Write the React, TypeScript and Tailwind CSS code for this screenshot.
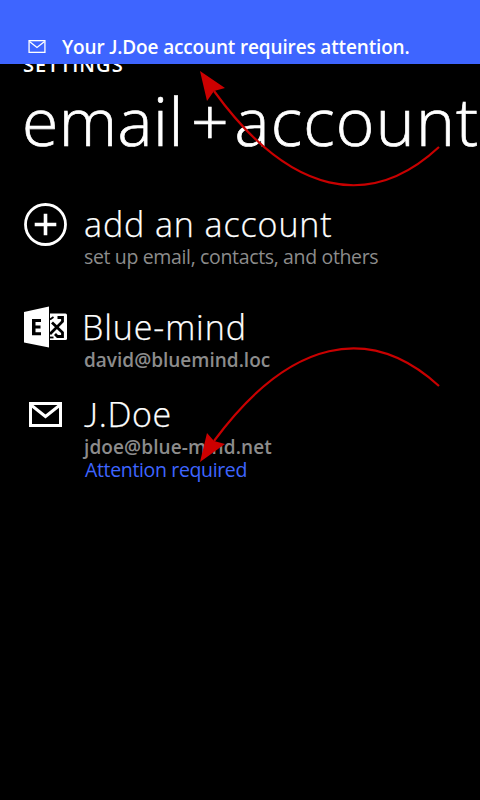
import type { ReactNode } from "react";

function Envelope({ className, stroke }: { className: string; stroke: number }) {
  return (
    <svg className={className} viewBox="0 0 33 25" fill="none" stroke="white" strokeWidth={stroke}>
      <rect x={stroke / 2} y={stroke / 2} width={33 - stroke} height={25 - stroke} />
      <path d="M2 3 L16.5 14.5 L31 3" />
    </svg>
  );
}

function AddIcon() {
  return (
    <svg className="h-[44px] w-[44px]" viewBox="0 0 44 44" fill="none" stroke="white">
      <circle cx="22.5" cy="22.5" r="20" strokeWidth="2.8" />
      <path d="M22.5 11.7V33.3M11.7 22.5H33.3" strokeWidth="3.6" />
    </svg>
  );
}

function ExchangeIcon() {
  return (
    <svg className="mt-px ml-px h-[42px] w-[44px]" viewBox="0 0 44 42">
      <path d="M0 6 L25 0.5 V41.5 L0 36.5 Z" fill="white" />
      <path d="M8 13H17V16H11.5V19.5H16.5V22.5H11.5V26.3H17V29.3H8Z" fill="black" />
      <path d="M26 7.5H41.5Q43 7.5 43 9V32.5Q43 34 41.5 34H26Z" fill="white" />
      <g fill="none" stroke="black" strokeWidth="2.4">
        <path d="M26 28 L38.5 15.5 V11.5 H33.5" strokeWidth="2.8" />
        <path d="M28 16.5 L38.5 26.5 V30.5 H33.5 L31 28" strokeWidth="2.8" />
        <path d="M26 13.5 L29.5 11" strokeWidth="1.8" />
        <path d="M26 31.5 L29.5 31.5" strokeWidth="1.8" />
      </g>
    </svg>
  );
}

function Row({ icon, children, className }: { icon: ReactNode; children: ReactNode; className: string }) {
  return (
    <div className={`flex ${className}`}>
      <div className="w-[61px] shrink-0">{icon}</div>
      <div className="mt-px flex flex-col whitespace-nowrap">{children}</div>
    </div>
  );
}

export default function App() {
  return (
    <div className="relative h-[800px] w-[480px] overflow-hidden bg-black font-['Open_Sans','Noto_Sans',sans-serif] text-white">
      <header className="pt-[52px] pl-[23px] whitespace-nowrap">
        <div className="h-[24px] text-[20px] leading-[25px] font-semibold tracking-[1.1px]">SETTINGS</div>
        <h1 className="mt-[4px] h-[80px] text-[66px] leading-[80px] font-light [-webkit-text-stroke:0.7px_white]">
          <span className="-ml-px tracking-[0.5px]">email</span>
          <span className="mr-[6px] ml-[7px]">+</span>
          <span className="tracking-[1.2px]">account</span>
        </h1>
      </header>

      <main className="pt-[42px] pl-[23px]">
        <Row className="h-[103px]" icon={<AddIcon />}>
          <div className="h-[42px] text-[34px] leading-[43px] font-light tracking-[0.9px] [-webkit-text-stroke:0.25px_white]">add an account</div>
          <div className="h-[24px] text-[19.5px] leading-[24px] tracking-[-0.35px] text-[#8c8c8c]">set up email, contacts, and others</div>
        </Row>
        <Row className="h-[87px]" icon={<ExchangeIcon />}>
          <div className="-ml-[2px] h-[42px] text-[34px] leading-[43px] font-light tracking-[0.9px] [-webkit-text-stroke:0.25px_white]">Blue-mind</div>
          <div className="h-[24px] text-[19px] leading-[24px] font-semibold text-[#8c8c8c]">david@bluemind.loc</div>
        </Row>
        <Row className="h-[91px]" icon={<Envelope stroke={3} className="mt-[10px] ml-[6px] h-[25px] w-[33px]" />}>
          <div className="h-[42px] text-[34px] leading-[41px] font-light tracking-[0.6px] [-webkit-text-stroke:0.25px_white]">
            <span className="font-['Lato']">J</span>.Doe
          </div>
          <div className="h-[23px] text-[19px] leading-[24px] font-semibold tracking-[0.1px] text-[#8c8c8c]">jdoe@blue-mind.net</div>
          <div className="ml-px h-[24px] text-[19.5px] leading-[24px] tracking-[-0.35px] text-[#3e65ff]">Attention required</div>
        </Row>
      </main>

      <div className="absolute inset-x-0 top-0 flex h-[64px] items-start bg-[#3e65ff] pt-[35px] pl-[28px]">
        <Envelope stroke={2.5} className="mt-[5px] h-[13px] w-[18px]" />
        <span className="ml-[16px] text-[19px] leading-[24px] font-semibold tracking-[-0.15px] whitespace-nowrap">
          Your <span className="font-['Lato']">J</span>.Doe account requires attention.
        </span>
      </div>

      <svg className="pointer-events-none absolute inset-0 h-[800px] w-[480px]" viewBox="0 0 480 800" fill="none">
        <g stroke="#c80000" strokeWidth="2.2">
          <path d="M439 147 C370 211 290 196 214 91" />
          <path d="M439 386 C370 323 290 338 214 441" />
        </g>
        <g fill="#cc0000">
          <path d="M200 71 L225 88 L214 91 L207 101 Z" />
          <path d="M200 462 L207 433 L214 441 L225 444 Z" />
        </g>
      </svg>
    </div>
  );
}
